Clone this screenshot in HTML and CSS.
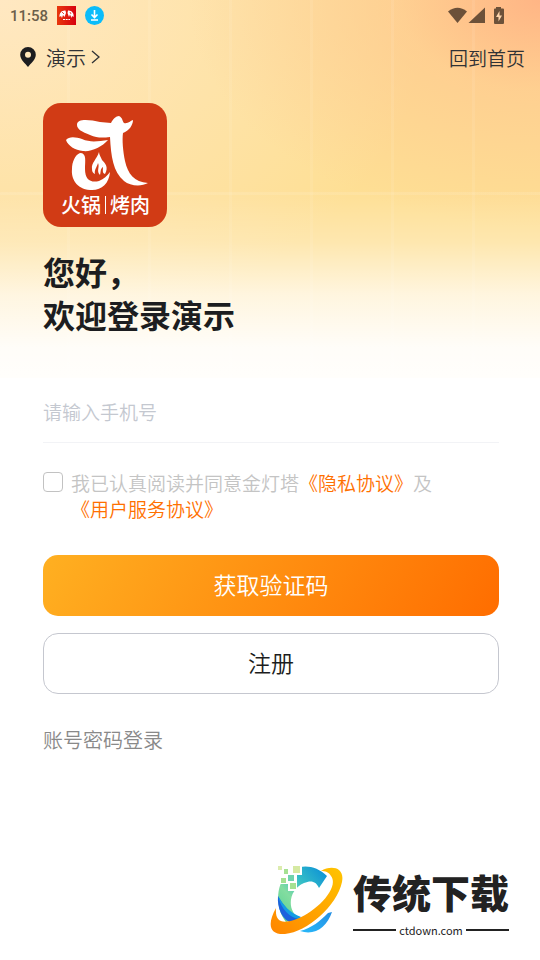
FILE: index.html
```
<!DOCTYPE html>
<html lang="zh-CN">
<head>
  <meta charset="UTF-8">
  <meta name="viewport" content="width=device-width, initial-scale=1.0">
  <title>登录</title>
  <link rel="stylesheet" href="styles.css">
</head>
<body>
  <header class="hero">
    <div class="status-bar">
      <span class="time">11:58</span>
      <svg class="app-icon" viewBox="0 0 19 19" aria-hidden="true">
        <defs>
          <linearGradient id="appRed"><stop offset="0" stop-color="#e8380d"/><stop offset="1" stop-color="#d7000f"/></linearGradient>
        </defs>
        <rect width="19" height="19" fill="url(#appRed)"/>
        <path d="M2.5 11C2 7 5 4 8.5 4.5L9 7L7.5 11L6 9L5 12L4 10ZM16.500 11C17.500 7 14 4 11 4.500L10.500 7L12 11L13 8.500L14.500 12L15 10Z" fill="#fff"/>
        <path d="M6 13.500H13" stroke="#fff" stroke-width="1" stroke-dasharray="2 .7"/>
        <path d="M5 6L7 8M13 6L14 8" stroke="#e02010" stroke-width=".8"/>
      </svg>
      <svg class="app-icon" viewBox="0 0 19 19" aria-hidden="true">
        <circle cx="9.500" cy="9.500" r="9.500" fill="#0bbcfa"/>
        <path d="M9.500 4V11M6.500 8.500L9.500 11.500L12.500 8.500M6 14H13" fill="none" stroke="#fff" stroke-width="1.600"/>
      </svg>
      <svg class="signals" viewBox="0 0 58 18" aria-hidden="true">
        <path d="M0 4.500Q9.500 -3 19 4.500L9.500 16Z"/>
        <path d="M37 .5V16H20.500Z"/>
        <path d="M48 1.500V0H53V1.500H55Q56 1.500 56 2.500V16Q56 17 55 17H47Q46 17 46 16V2.500Q46 1.500 47 1.500Z"/>
        <path class="bolt" d="M51.500 4L48 10H50.500V14.500L54 8.500H51.500Z"/>
      </svg>
    </div>
    <nav class="nav">
      <button type="button" class="place">
        <svg class="pin" viewBox="0 0 16 20" aria-hidden="true">
          <path fill-rule="evenodd" d="M8 0A7.800 7.800 0 0 0 .2 7.800C.2 13 5.500 16.500 8 20C10.500 16.500 15.800 13 15.800 7.800A7.800 7.800 0 0 0 8 0ZM8 4.800A3 3 0 1 1 8 10.800A3 3 0 1 1 8 4.800Z"/>
        </svg>
        <span>演示</span>
        <svg class="chevron" viewBox="0 0 9 14" aria-hidden="true"><path d="M1 1L8 7L1 13"/></svg>
      </button>
      <a class="home" href="#">回到首页</a>
    </nav>
    <div class="intro">
      <div class="brand">
        <svg class="brand-mark" viewBox="0 0 84 76" aria-hidden="true">
          <path d="M11 9C11 2 24 4 34 6L45 7C47 3 50 0 53 0C57 2 56 5 58 7C62 8 64 5 67 4C67 9 63 15 57 17C56 24 57 35 59 45C62 58 68 66 82 67C75 71 64 70 58 65C47 56 45 40 44 21C36 22 31 22 24 19C16 16 11 13 11 9Z"/>
          <path d="M0 24C3 20 10 21 16 23C25 27 33 25 42 24C36 31 25 36 17 35C9 34 2 30 0 24Z"/>
          <path d="M14 37C21 37 19 45 19 53C19 64 25 67 33 65C38 63 41 60 44 56C43 68 35 75 24 74C10 73 5 62 6 53C6 46 9 39 14 37Z"/>
          <path d="M33 36C31 43 25 47 26 53C26 56 27 57 29 58C28 54 31 51 32 47C34 51 30 55 34 59C35 56 34 53 37 51C37 54 36 57 39 58C43 51 39 47 36 44C35 41 33 39 33 36Z"/>
        </svg>
        <div class="brand-name"><span>火锅</span><span class="brand-rule"></span><span>烤肉</span></div>
      </div>
      <h1>您好，<br>欢迎登录演示</h1>
    </div>
  </header>

  <main class="content">
    <form class="login">
      <input class="phone" type="tel" placeholder="请输入手机号" aria-label="手机号">
      <div class="agree">
        <input type="checkbox" id="agree">
        <label for="agree">我已认真阅读并同意金灯塔<a href="#">《隐私协议》</a>及<a href="#">《用户服务协议》</a></label>
      </div>
      <button type="button" class="btn primary">获取验证码</button>
      <button type="button" class="btn outline">注册</button>
      <a class="password-login" href="#">账号密码登录</a>
    </form>
  </main>

  <footer class="site">
    <svg class="site-mark" viewBox="0 0 74 70" aria-hidden="true">
      <defs>
        <linearGradient id="cTop" x1="1" y1="0" x2="0" y2="1"><stop offset="0" stop-color="#078bd8"/><stop offset=".4" stop-color="#35bec7"/><stop offset=".65" stop-color="#83dda0"/><stop offset="1" stop-color="#55cf91"/></linearGradient>
        <linearGradient id="cLow" x1="0" y1="1" x2="1" y2="0"><stop offset="0" stop-color="#29b9fa"/><stop offset="1" stop-color="#248ee3"/></linearGradient>
        <linearGradient id="ring" x1="0" y1="1" x2="1" y2="0"><stop offset="0" stop-color="#ff8500"/><stop offset="1" stop-color="#ffc400"/></linearGradient>
      </defs>
      <path fill="url(#cTop)" d="M57 10C44-3 26-2 16 9C6 20 5 42 16 56L29 52C16 44 19 23 34 17C41 14 46 15 49 22Z"/>
      <path fill="#1c61dd" d="M8 30C7 42 12 54 22 57L31 52C20 48 13 39 8 30Z"/>
      <path fill="#159ce3" d="M8 30C11 43 20 52 29 53L31 51C20 47 13 39 8 30Z"/>
      <path fill="url(#cLow)" d="M62 46C57 61 45 70 30 65C42 62 50 55 58 47Z"/>
      <path fill="url(#ring)" d="M51 5C61-1 75 1 72 16C67 40 37 66 15 68C-1 69-3 58 6 42C5 55 11 58 24 54C45 47 70 22 61 10C59 6 55 5 51 5Z"/>
      <path fill="#fff" d="M5 0H32V9H27V25H18V18H9V10H5Z"/>
      <g fill="#a5e192">
        <rect x="8" y="0" width="4" height="4" fill="#dcecae"/>
        <rect x="23" y="0" width="7" height="7" fill="#d5e9a2"/>
        <rect x="14" y="3" width="4" height="5"/>
        <rect x="11" y="12" width="5" height="5"/>
        <rect x="20" y="17" width="6" height="6"/>
      </g>
      <path fill="#6fd3ac" d="M18 9H24V15H18Z"/>
    </svg>
    <div class="site-text">
      <strong>传统下载</strong>
      <span class="domain">ctdown.com</span>
    </div>
  </footer>
</body>
</html>
```

FILE: styles.css
```
* {
  box-sizing: border-box;
}
body {
  margin: 0;
  min-height: 100vh;
  display: flex;
  flex-direction: column;
  background: #fff;
  color: #1c1d20;
  font-family: "Noto Sans CJK SC", sans-serif;
}
button, input {
  font-family: inherit;
}
a {
  text-decoration: none;
}
.hero {
  padding-bottom: 42px;
  background:
    linear-gradient(to bottom, transparent 50%, rgba(255, 255, 255, 0.25) 64%, rgba(255, 255, 255, 0.7) 78%, rgba(255, 255, 255, 0.94) 92%, rgba(255, 255, 255, 0.97)),
    linear-gradient(to right, rgba(255, 255, 255, 0.07) 3px, transparent 3px) 67px 0 / 81px 100%,
    linear-gradient(rgba(255, 255, 255, 0.1), rgba(255, 255, 255, 0.1)) 0 192px / 100% 3px no-repeat,
    radial-gradient(ellipse 65% 60% at 100% 0, #ffb585, rgba(255, 195, 142, 0.55) 40%, transparent),
    radial-gradient(ellipse 80% 90% at 0 0, #ffe8c2, transparent),
    #fedf94;
}
.status-bar {
  display: flex;
  align-items: center;
  height: 31px;
  padding: 0 34px 0 10px;
}
.time {
  margin-right: 9px;
  color: #6c5f4a;
  font: 500 15px Roboto, sans-serif;
}
.app-icon {
  width: 19px;
  height: 19px;
  margin-right: 9px;
}
.signals {
  width: 58px;
  height: 18px;
  margin-left: auto;
  fill: #6c5139;
}
.signals .bolt {
  fill: #ffd6ac;
}
.nav {
  display: flex;
  justify-content: space-between;
  align-items: center;
  height: 54px;
  padding: 0 15px 2px 20px;
}
.place {
  display: flex;
  align-items: center;
  padding: 0;
  border: 0;
  background: none;
  color: #303235;
  font-size: 20px;
  font-weight: 350;
}
.pin {
  width: 16px;
  height: 20px;
  margin-right: 10px;
  fill: #1c1d20;
}
.chevron {
  width: 9px;
  height: 14px;
  margin-left: 5px;
  fill: none;
  stroke: #303235;
  stroke-width: 1.3;
}
.home {
  color: #303235;
  font-size: 19px;
  font-weight: 350;
}
.intro {
  padding: 18px 43px 0;
}
.brand {
  width: 124px;
  height: 124px;
  padding: 13px 0 0 18px;
  border-radius: 18px;
  background: #d13b15;
  color: #fff;
}
.brand-mark {
  display: block;
  width: 84px;
  height: 76px;
  margin-left: 5px;
  fill: #fff;
}
.brand-name {
  display: flex;
  align-items: center;
  gap: 4px;
  font-size: 20px;
  font-weight: 500;
  line-height: 26px;
}
.brand-rule {
  width: 1px;
  height: 18px;
  background: #fff;
}
h1 {
  margin: 23px 0 0;
  font-size: 32px;
  font-weight: 700;
  line-height: 43px;
}
.content {
  padding: 0 41px 0 43px;
}
.login {
  display: flex;
  flex-direction: column;
}
.phone {
  width: 100%;
  height: 65px;
  padding: 2px 0 0;
  border: 0;
  border-bottom: 1px solid #f2f3f6;
  outline: 0;
  background: none;
  color: #1c1d20;
  font-size: 19px;
  font-weight: 350;
}
.phone::placeholder {
  color: #c4c8d0;
}
.agree {
  display: flex;
  align-items: flex-start;
  gap: 8px;
  margin: 27px 0 33px;
  color: #c4c4c4;
  font-size: 19px;
  font-weight: 350;
  line-height: 26px;
}
.agree input {
  appearance: none;
  flex: none;
  width: 20px;
  height: 20px;
  margin: 2px 0 0;
  border: 1px solid #c2c2c2;
  border-radius: 4px;
  background: #fff;
}
.agree input:checked {
  border-color: #ff7000;
  background: #ff7000;
}
.agree a {
  display: inline-block;
  color: #ff7000;
}
.btn {
  height: 61px;
  padding: 0 0 4px;
  border-radius: 15px;
  font-size: 23px;
  font-weight: 350;
  cursor: pointer;
}
.primary {
  margin-bottom: 17px;
  border: 0;
  background: linear-gradient(120deg, #ffb021, #ff6d00);
  color: #fff;
}
.outline {
  border: 1px solid #c5c7cf;
  background: #fff;
  color: #1c1d20;
}
.password-login {
  align-self: flex-start;
  margin-top: 31px;
  color: #898989;
  font-size: 20px;
  font-weight: 350;
}
.site {
  display: flex;
  justify-content: flex-end;
  align-items: flex-start;
  gap: 9px;
  margin-top: auto;
  padding: 0 31px 22px;
}
.site-mark {
  width: 74px;
  height: 70px;
}
.site-text {
  color: #222;
}
.site-text strong {
  display: block;
  margin-bottom: 6px;
  font-size: 39px;
  font-weight: 900;
  line-height: 50px;
}
.domain {
  display: flex;
  align-items: center;
  gap: 3px;
  font-size: 11px;
  line-height: 16px;
}
.domain::before, .domain::after {
  content: "";
  flex: 1;
  height: 2px;
  background: #222;
}
```
